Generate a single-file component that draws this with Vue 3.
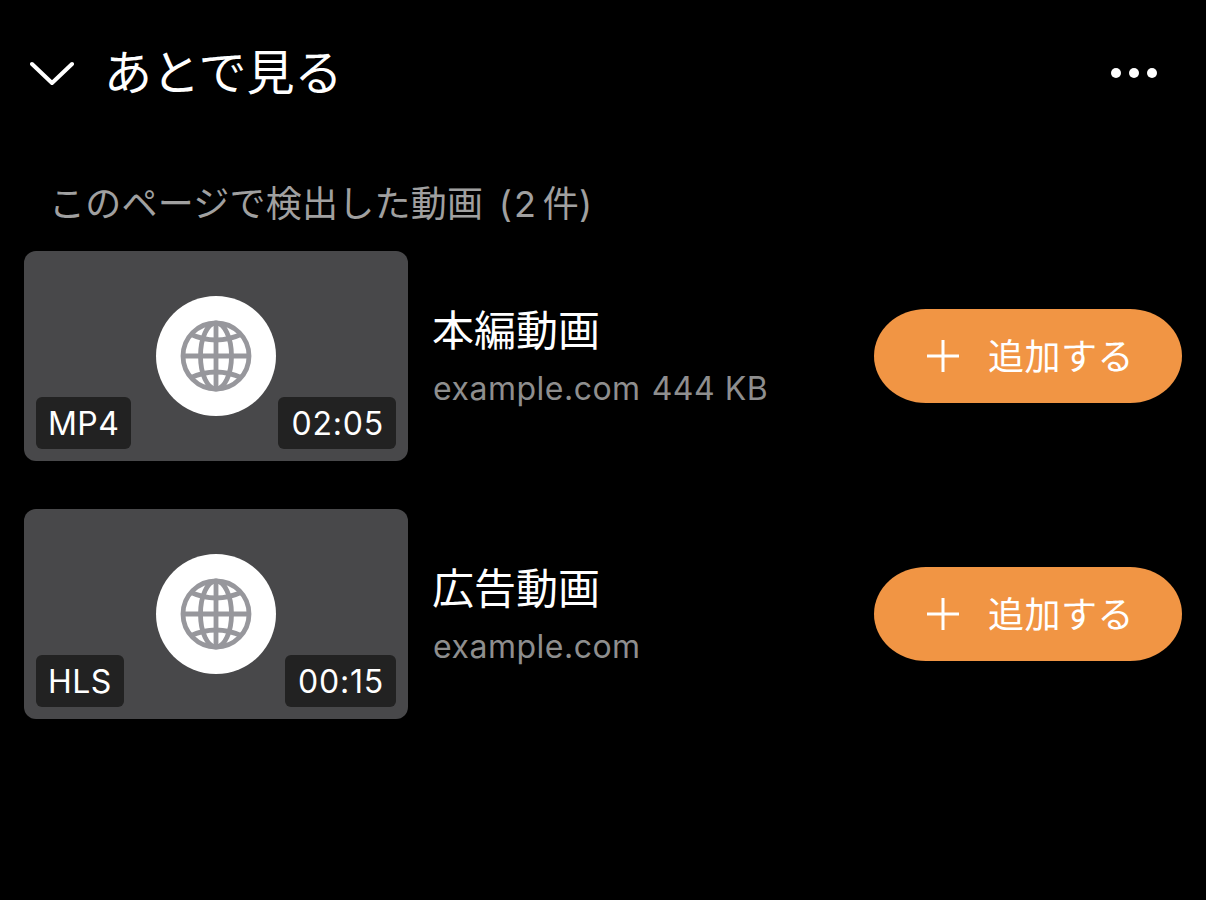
<script setup>
const videos = [
  { title: '本編動画', host: 'example.com', size: '444 KB', format: 'MP4', time: '02:05' },
  { title: '広告動画', host: 'example.com', size: '', format: 'HLS', time: '00:15' },
]
</script>

<template>
  <div class="page">
    <header class="head">
      <svg class="chev" width="44" height="26" viewBox="0 0 44 26" fill="none">
        <path d="M2 4 L22 23 L42 4" stroke="#fff" stroke-width="4" stroke-linecap="round" stroke-linejoin="round" />
      </svg>
      <h1 class="title">あとで見る</h1>
      <svg class="more" width="48" height="12" viewBox="0 0 48 12" fill="#fff">
        <circle cx="6" cy="6" r="5" /><circle cx="24" cy="6" r="5" /><circle cx="42" cy="6" r="5" />
      </svg>
    </header>

    <p class="label">このページで検出した動画 <span class="count">(</span><span class="num">2</span> 件)</p>

    <ul class="list">
      <li v-for="v in videos" :key="v.title" class="row">
        <div class="thumb">
          <div class="disc">
            <svg width="72" height="72" viewBox="0 0 72 72" fill="none" stroke="#97979c" stroke-width="4.8">
              <circle cx="36" cy="36" r="33" />
              <ellipse cx="36" cy="36" rx="15.5" ry="33" />
              <path d="M36 3 V69 M3 36 H69" />
              <path d="M10 14 Q36 26 62 14 M10 58 Q36 46 62 58" />
            </svg>
          </div>
          <span class="badge left">{{ v.format }}</span>
          <span class="badge right">{{ v.time }}</span>
        </div>
        <div class="info">
          <div class="name">{{ v.title }}</div>
          <div class="meta"><span>{{ v.host }}</span><span v-if="v.size">{{ v.size }}</span></div>
        </div>
        <button class="add">
          <svg width="32" height="32" viewBox="0 0 32 32" stroke="#fff" stroke-width="3" fill="none">
            <path d="M16 0 V32 M0 16 H32" />
          </svg>
          <span class="add-text">追加する</span>
        </button>
      </li>
    </ul>
  </div>
</template>

<style>
html, body { margin: 0; background: #000; }
</style>

<style scoped>
.page {
  width: 1206px;
  height: 900px;
  background: #000;
  color: #fff;
  font-family: Inter, "Noto Sans CJK JP", sans-serif;
  box-sizing: border-box;
  overflow: hidden;
}
.head {
  display: flex;
  align-items: center;
  height: 144px;
  padding: 0 48px 0 30px;
  box-sizing: border-box;
}
.chev { flex: none; margin-top: 2px; }
.more { margin-top: 1px; }
.title {
  margin: 2px 0 0 30px;
  font-size: 48px;
  font-weight: 400;
  line-height: 1;
  flex: 1;
}
.label {
  margin: 0;
  padding-left: 49px;
  height: 107px;
  padding-top: 37px;
  box-sizing: border-box;
  font-size: 36px;
  line-height: 46px;
  letter-spacing: 0.25px;
  word-spacing: -4px;
  color: #a0a0a0;
}
.count { margin-left: 9px; }
.num { margin: 0 0 0 2px; }
.list {
  list-style: none;
  margin: 0;
  padding: 0 24px;
  display: flex;
  flex-direction: column;
  gap: 48px;
}
.row {
  display: flex;
  align-items: center;
  height: 210px;
}
.thumb {
  position: relative;
  width: 384px;
  height: 210px;
  flex: none;
  border-radius: 12px;
  background: #48484a;
  display: flex;
  align-items: center;
  justify-content: center;
}
.disc {
  width: 120px;
  height: 120px;
  border-radius: 50%;
  background: #fff;
  display: flex;
  align-items: center;
  justify-content: center;
}
.badge {
  position: absolute;
  bottom: 12px;
  height: 52px;
  background: #222;
  border-radius: 6px;
  font-size: 32px;
  line-height: 53px;
}
.left {
  left: 12px;
  padding: 0 12px;
  letter-spacing: 0.4px;
}
.right {
  right: 12px;
  padding: 0 12px 0 13px;
  letter-spacing: 0.8px;
}
.info {
  flex: 1;
  margin-left: 24px;
  min-width: 0;
}
.name {
  font-size: 42px;
  line-height: 52px;
  margin-top: 1px;
}
.meta {
  display: flex;
  gap: 11px;
  margin: 12px 0 0 1px;
  font-size: 32px;
  line-height: 40px;
  letter-spacing: 0.5px;
  color: #8e8e8e;
}
.add {
  flex: none;
  width: 308px;
  height: 94px;
  border: 0;
  border-radius: 52px / 47px;
  background: #f19544;
  color: #fff;
  font: inherit;
  font-size: 36px;
  display: flex;
  align-items: center;
  padding: 0 0 0 53px;
  gap: 29px;
}
.add-text {
  margin-top: -4px;
  letter-spacing: 0.5px;
}
</style>
